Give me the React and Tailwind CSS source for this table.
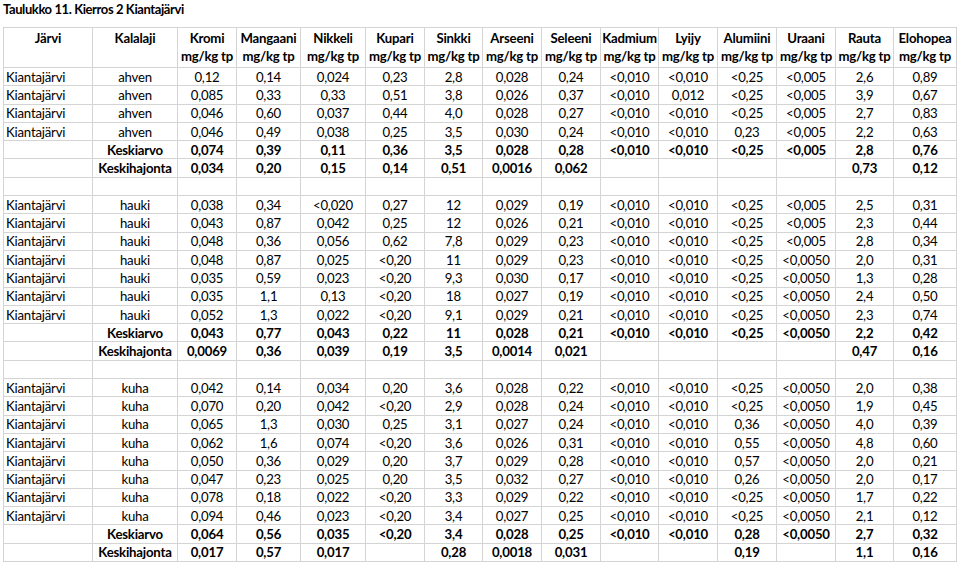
import React from "react";

const metals = [
  "Kromi", "Mangaani", "Nikkeli", "Kupari", "Sinkki", "Arseeni", "Seleeni",
  "Kadmium", "Lyijy", "Alumiini", "Uraani", "Rauta", "Elohopea",
];

const widths = [89, 85, 59, 64, 65, 59, 58, 59, 59, 58, 59, 59, 59, 58, 63];

const r = (laji, s) => ({ lake: "Kiantajärvi", laji, vals: s.split("|") });
const avg = (s) => ({ lake: "", laji: "Keskiarvo", vals: s.split("|"), bold: true });
const sd = (s) => ({ lake: "", laji: "Keskihajonta", vals: s.split("|"), bold: true });
const blank = { lake: "", laji: "", vals: Array(13).fill("") };

const rows = [
  r("ahven", "0,12|0,14|0,024|0,23|2,8|0,028|0,24|<0,010|<0,010|<0,25|<0,005|2,6|0,89"),
  r("ahven", "0,085|0,33|0,33|0,51|3,8|0,026|0,37|<0,010|0,012|<0,25|<0,005|3,9|0,67"),
  r("ahven", "0,046|0,60|0,037|0,44|4,0|0,028|0,27|<0,010|<0,010|<0,25|<0,005|2,7|0,83"),
  r("ahven", "0,046|0,49|0,038|0,25|3,5|0,030|0,24|<0,010|<0,010|0,23|<0,005|2,2|0,63"),
  avg("0,074|0,39|0,11|0,36|3,5|0,028|0,28|<0,010|<0,010|<0,25|<0,005|2,8|0,76"),
  sd("0,034|0,20|0,15|0,14|0,51|0,0016|0,062|||||0,73|0,12"),
  blank,
  r("hauki", "0,038|0,34|<0,020|0,27|12|0,029|0,19|<0,010|<0,010|<0,25|<0,005|2,5|0,31"),
  r("hauki", "0,043|0,87|0,042|0,25|12|0,026|0,21|<0,010|<0,010|<0,25|<0,005|2,3|0,44"),
  r("hauki", "0,048|0,36|0,056|0,62|7,8|0,029|0,23|<0,010|<0,010|<0,25|<0,005|2,8|0,34"),
  r("hauki", "0,048|0,87|0,025|<0,20|11|0,029|0,23|<0,010|<0,010|<0,25|<0,0050|2,0|0,31"),
  r("hauki", "0,035|0,59|0,023|<0,20|9,3|0,030|0,17|<0,010|<0,010|<0,25|<0,0050|1,3|0,28"),
  r("hauki", "0,035|1,1|0,13|<0,20|18|0,027|0,19|<0,010|<0,010|<0,25|<0,0050|2,4|0,50"),
  r("hauki", "0,052|1,3|0,022|<0,20|9,1|0,029|0,21|<0,010|<0,010|<0,25|<0,0050|2,3|0,74"),
  avg("0,043|0,77|0,043|0,22|11|0,028|0,21|<0,010|<0,010|<0,25|<0,0050|2,2|0,42"),
  sd("0,0069|0,36|0,039|0,19|3,5|0,0014|0,021|||||0,47|0,16"),
  blank,
  r("kuha", "0,042|0,14|0,034|0,20|3,6|0,028|0,22|<0,010|<0,010|<0,25|<0,0050|2,0|0,38"),
  r("kuha", "0,070|0,20|0,042|<0,20|2,9|0,028|0,24|<0,010|<0,010|<0,25|<0,0050|1,9|0,45"),
  r("kuha", "0,065|1,3|0,030|0,25|3,1|0,027|0,24|<0,010|<0,010|0,36|<0,0050|4,0|0,39"),
  r("kuha", "0,062|1,6|0,074|<0,20|3,6|0,026|0,31|<0,010|<0,010|0,55|<0,0050|4,8|0,60"),
  r("kuha", "0,050|0,36|0,029|0,20|3,7|0,029|0,28|<0,010|<0,010|0,57|<0,0050|2,0|0,21"),
  r("kuha", "0,047|0,23|0,025|0,20|3,5|0,032|0,27|<0,010|<0,010|0,26|<0,0050|2,0|0,17"),
  r("kuha", "0,078|0,18|0,022|<0,20|3,3|0,029|0,22|<0,010|<0,010|<0,25|<0,0050|1,7|0,22"),
  r("kuha", "0,094|0,46|0,023|<0,20|3,4|0,027|0,25|<0,010|<0,010|<0,25|<0,0050|2,1|0,12"),
  avg("0,064|0,56|0,035|<0,20|3,4|0,028|0,25|<0,010|<0,010|0,28|<0,0050|2,7|0,32"),
  sd("0,017|0,57|0,017||0,28|0,0018|0,031|||0,19||1,1|0,16"),
];

// excel-style gridlines
const cell = "border border-[#d4d4d4] p-0 h-[18.3px] leading-[16px] whitespace-nowrap";
const head = "border border-[#d4d4d4] p-0 pt-[1px] h-[40px] align-top leading-[18px] font-bold whitespace-nowrap";

export default function App() {
  return (
    <div className="w-[960px] h-[564px] overflow-hidden bg-white text-black font-['Lato',sans-serif] text-[13.2px] tracking-[-0.2px]">
      <div className="h-[27px] pl-[3px] pt-[1px] font-bold leading-[16px] text-[13px] tracking-[-0.4px]">
        Taulukko 11. Kierros 2 Kiantajärvi
      </div>
      <table className="ml-[3px] table-fixed border-collapse">
        <colgroup>
          {widths.map((w, i) => (
            <col key={i} style={{ width: w }} />
          ))}
        </colgroup>
        <thead>
          <tr>
            <th className={head}>Järvi</th>
            <th className={head}>Kalalaji</th>
            {metals.map((m) => (
              <th key={m} className={head}>
                {m}
                <br />
                mg/kg tp
              </th>
            ))}
          </tr>
        </thead>
        <tbody>
          {rows.map((row, i) => (
            <tr key={i}>
              <td className={`${cell} text-left pl-[2px]`}>{row.lake}</td>
              <td className={`${cell} text-center ${row.bold ? "font-bold" : ""}`}>{row.laji}</td>
              {row.vals.map((v, j) => (
                <td key={j} className={`${cell} text-center ${row.bold ? "font-bold" : ""}`}>
                  {v}
                </td>
              ))}
            </tr>
          ))}
        </tbody>
      </table>
    </div>
  );
}
